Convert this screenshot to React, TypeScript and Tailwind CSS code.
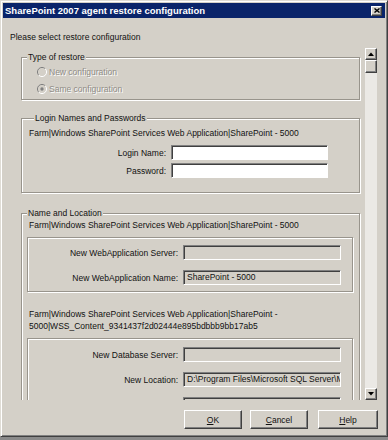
import type { ReactNode } from "react";

const raised =
  "border border-t-white border-l-white border-r-[#404040] border-b-[#404040] shadow-[inset_-1px_-1px_0_#808080] bg-[#d4d0c8]";
const sunken =
  "border border-t-[#808080] border-l-[#808080] border-r-white border-b-white shadow-[inset_1px_1px_0_#404040]";
const etched =
  "border border-[#98948c] shadow-[1px_1px_0_#fff,inset_1px_1px_0_#fff]";

function Radio({ label, checked }: { label: string; checked?: boolean }) {
  return (
    <div className="flex h-[12px] items-center">
      <svg width="10" height="10" viewBox="0 0 12 12" className="ml-[15px]">
        <circle cx="6" cy="6" r="5" fill="#d4d0c8" />
        <path d="M2.11 9.89 A5.5 5.5 0 0 1 9.89 2.11" stroke="#808080" strokeWidth="1.2" fill="none" />
        <path d="M9.89 2.11 A5.5 5.5 0 0 1 2.11 9.89" stroke="#ffffff" strokeWidth="1.2" fill="none" />
        {checked && <circle cx="6" cy="6" r="2" fill="#808080" />}
      </svg>
      <span className="ml-[2px] text-[#8f8c86] [text-shadow:1px_1px_0_#fff]">{label}</span>
    </div>
  );
}

function Group({ title, className, children }: { title: string; className?: string; children: ReactNode }) {
  return (
    <fieldset className={`w-[339px] ${etched} ${className ?? ""}`}>
      <legend className="ml-[5px] bg-[#d4d0c8] px-[1px] leading-[10px]">{title}</legend>
      {children}
    </fieldset>
  );
}

function Row({
  label,
  labelW,
  inputW,
  value,
  white,
  className,
}: {
  label: string;
  labelW: string;
  inputW: string;
  value?: string;
  white?: boolean;
  className?: string;
}) {
  return (
    <div className={`flex items-center ${className ?? ""}`}>
      <span className={`${labelW} text-right whitespace-nowrap`}>{label}</span>
      <div
        className={`ml-[5px] ${inputW} h-[15px] ${sunken} ${white ? "bg-white" : "bg-[#d4d0c8]"} overflow-hidden whitespace-nowrap pl-[3px] leading-[13px]`}
      >
        {value}
      </div>
    </div>
  );
}

function Arrow({ up }: { up?: boolean }) {
  return (
    <div className={`flex h-[12px] w-[12px] items-center justify-center ${raised}`}>
      <svg width="6" height="4" viewBox="0 0 6 4">
        <path d={up ? "M0 4 L3 0.5 L6 4 Z" : "M0 0 L3 3.5 L6 0 Z"} fill="#000" />
      </svg>
    </div>
  );
}

export default function App() {
  return (
    <div
      className="h-[440px] w-[388px] overflow-hidden bg-[#8a8a8a] text-[8.5px] leading-[10px] text-[#111]"
      style={{ fontFamily: '"Liberation Sans", Arial, sans-serif' }}
    >
      <div className="flex h-[437px] w-[388px] flex-col border border-t-[#dfdcd5] border-l-[#dfdcd5] border-r-[#404040] border-b-[#404040] bg-[#d4d0c8] p-[2px] shadow-[inset_1px_1px_0_#fff,inset_-1px_-1px_0_#808080]">
        {/* title bar */}
        <div className="flex h-[15px] items-center bg-[#0a246a] pl-[2px] pr-[3px]">
          <span className="flex-1 text-[9.5px] font-bold text-white">
            SharePoint 2007 agent restore configuration
          </span>
          <div className={`flex h-[10px] w-[11px] items-center justify-center ${raised}`}>
            <svg width="6" height="5" viewBox="0 0 6 5">
              <path d="M0.5 0.5 L5.5 4.5 M5.5 0.5 L0.5 4.5" stroke="#000" strokeWidth="1.4" />
            </svg>
          </div>
        </div>

        <div className="mt-[14px] pl-[7px]">Please select restore configuration</div>

        {/* scroll area */}
        <div className="ml-[9px] mt-[6px] flex h-[352px] w-[365px] overflow-hidden">
          <div className="flex-1 overflow-hidden pl-[9px]">
            <Group title="Type of restore" className="mt-[4px] pb-[4px] pt-[4px]">
              <div className="flex flex-col gap-[5px]">
                <Radio label="New configuration" />
                <Radio label="Same configuration" checked />
              </div>
            </Group>

            <Group title="Login Names and Passwords" className="mt-[13px] pb-[14px] pl-[7px] pt-[5px]">
              <div>Farm|Windows SharePoint Services Web Application|SharePoint - 5000</div>
              <Row label="Login Name:" labelW="w-[137px]" inputW="w-[157px]" white className="mt-[7px]" />
              <Row label="Password:" labelW="w-[137px]" inputW="w-[157px]" white className="mt-[3px]" />
            </Group>

            <Group title="Name and Location" className="mt-[15px] pt-[2px]">
              <div className="pl-[7px]">Farm|Windows SharePoint Services Web Application|SharePoint - 5000</div>
              <div className={`ml-[5px] mt-[7px] w-[326px] pb-[6px] pt-[7px] ${etched}`}>
                <Row label="New WebApplication Server:" labelW="w-[150px]" inputW="w-[158px]" />
                <Row
                  label="New WebApplication Name:"
                  labelW="w-[150px]"
                  inputW="w-[158px]"
                  value="SharePoint - 5000"
                  className="mt-[10px]"
                />
              </div>
              <div className="mt-[16px] pl-[7px] leading-[12px]">
                Farm|Windows SharePoint Services Web Application|SharePoint -
                <br />
                5000|WSS_Content_9341437f2d02444e895bdbbb9bb17ab5
              </div>
              <div className={`ml-[5px] mt-[6px] w-[326px] pb-[6px] pt-[8px] ${etched}`}>
                <Row label="New Database Server:" labelW="w-[150px]" inputW="w-[158px]" />
                <Row
                  label="New Location:"
                  labelW="w-[150px]"
                  inputW="w-[158px]"
                  value={"D:\\Program Files\\Microsoft SQL Server\\MSSQL.1\\MSSQL\\Data"}
                  className="mt-[10px]"
                />
                <Row label="New Database Name:" labelW="w-[150px]" inputW="w-[158px]" className="mt-[10px]" />
              </div>
            </Group>
          </div>

          {/* scrollbar */}
          <div className="flex w-[12px] flex-col">
            <Arrow up />
            <div className={`h-[13px] w-[12px] ${raised}`} />
            <div className="flex-1 bg-[#ebe9e5]" />
            <Arrow />
          </div>
        </div>

        {/* buttons */}
        <div className="mt-[10px] flex justify-end pr-[7px]">
          <button className={`mr-[8px] h-[19px] w-[58px] ${raised} shadow-[0_0_0_1px_#000,inset_-1px_-1px_0_#808080]`}>
            <span className="underline">O</span>K
          </button>
          <button className={`mr-[10px] h-[19px] w-[58px] ${raised}`}>
            <span className="underline">C</span>ancel
          </button>
          <button className={`h-[19px] w-[60px] ${raised}`}>
            <span className="underline">H</span>elp
          </button>
        </div>
      </div>
    </div>
  );
}
